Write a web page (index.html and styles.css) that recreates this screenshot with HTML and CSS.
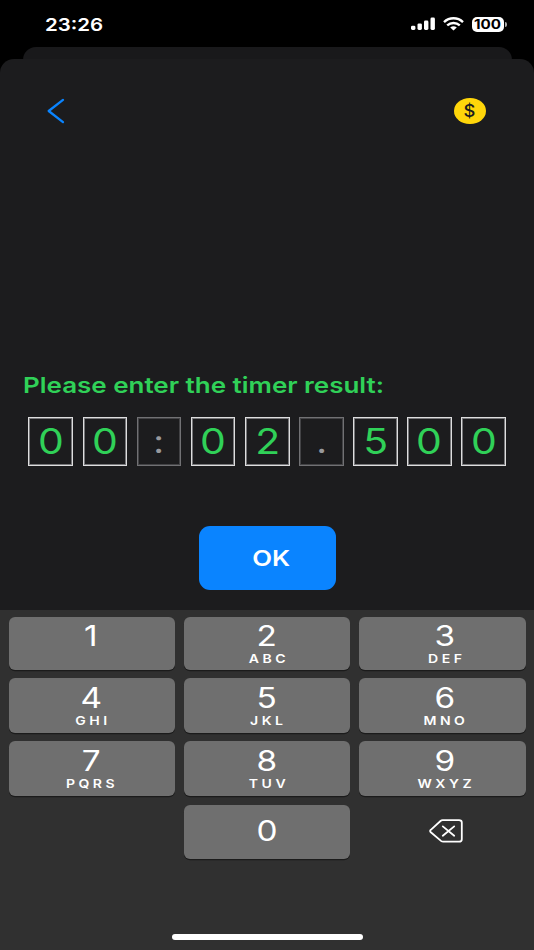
FILE: index.html
```html
<!DOCTYPE html>
<html lang="en">
<head>
<meta charset="utf-8">
<title>Timer result</title>
<link rel="stylesheet" href="styles.css">
</head>
<body>
<div class="screen">
  <header class="status">
    <span class="clock wide">23:26</span>
    <svg class="signal" width="25" height="14" viewBox="0 0 25 14" fill="#fff">
      <rect x="0" y="8.7" width="4.4" height="4.3" rx="1.4"/>
      <rect x="6.5" y="6.4" width="4.4" height="6.6" rx="1.4"/>
      <rect x="13" y="3.5" width="4.4" height="9.5" rx="1.4"/>
      <rect x="19.5" y="0.6" width="4.4" height="12.4" rx="1.4"/>
    </svg>
    <svg class="wifi" width="21" height="14" viewBox="0 0 21 14" fill="none" stroke="#fff" stroke-width="2.4">
      <path d="M1 5.1C6.4 0 14.6 0 20 5.1"/>
      <path d="M4.2 8.4C7.9 5.1 13.1 5.1 16.8 8.4"/>
      <path d="M7.2 10.6Q10.5 7.8 13.8 10.6L10.5 13.4Z" fill="#fff" stroke="none"/>
    </svg>
    <span class="battery"><span class="wide">100</span></span>
    <span class="battery-tip"></span>
  </header>
  <div class="sheet-behind"></div>
  <main class="sheet">
    <nav class="nav">
      <svg class="back" width="18" height="26" viewBox="0 0 18 26" fill="none" stroke="#0a84ff" stroke-width="2.3" stroke-linecap="round" stroke-linejoin="round">
        <path d="M16 1.9L1.7 13L16 24.1"/>
      </svg>
      <span class="coin"><span class="wide">$</span></span>
    </nav>
    <h1 class="prompt"><span class="wide">Please enter the timer result:</span></h1>
    <div class="digits">
      <span class="digit"><span class="wide">0</span></span>
      <span class="digit"><span class="wide">0</span></span>
      <span class="digit sep"><span class="wide">:</span></span>
      <span class="digit"><span class="wide">0</span></span>
      <span class="digit"><span class="wide">2</span></span>
      <span class="digit sep"><span class="wide">.</span></span>
      <span class="digit"><span class="wide">5</span></span>
      <span class="digit"><span class="wide">0</span></span>
      <span class="digit"><span class="wide">0</span></span>
    </div>
    <button class="ok"><span class="wide">OK</span></button>
  </main>
  <section class="keyboard">
    <div class="keys">
      <button class="key"><b class="wide">1</b></button>
      <button class="key"><b class="wide">2</b><small class="wide">ABC</small></button>
      <button class="key"><b class="wide">3</b><small class="wide">DEF</small></button>
      <button class="key"><b class="wide">4</b><small class="wide">GHI</small></button>
      <button class="key"><b class="wide">5</b><small class="wide">JKL</small></button>
      <button class="key"><b class="wide">6</b><small class="wide">MNO</small></button>
      <button class="key"><b class="wide">7</b><small class="wide">PQRS</small></button>
      <button class="key"><b class="wide">8</b><small class="wide">TUV</small></button>
      <button class="key"><b class="wide">9</b><small class="wide">WXYZ</small></button>
      <span></span>
      <button class="key zero"><b class="wide">0</b></button>
      <button class="delete" aria-label="Delete">
        <svg width="34" height="24" viewBox="0 0 34 24" fill="none" stroke="#fff" stroke-width="1.8" stroke-linecap="round" stroke-linejoin="round">
          <path d="M13.6 1.2H30Q32.8 1.2 32.8 3.6V20.2Q32.8 22.7 30 22.7H14.3Q13 22.7 12 21.9L1.8 13.3Q0.4 12 1.8 10.8L11.5 2Q12.4 1.2 13.6 1.2Z"/>
          <path d="M13.8 7.4L25.2 16.8M25.2 7.4L13.8 16.8"/>
        </svg>
      </button>
    </div>
    <div class="home"></div>
  </section>
</div>
</body>
</html>
```
FILE: styles.css
```css
* { box-sizing: border-box; }
body { margin: 0; background: #000; font-family: Inter, "Liberation Sans", sans-serif; }
button { border: 0; padding: 0; font: inherit; color: inherit; }
.wide { display: inline-block; white-space: nowrap; transform: scaleX(1.17); }
.screen { width: 534px; height: 950px; overflow: hidden; display: flex; flex-direction: column; color: #fff; }

.status { height: 47px; flex: none; display: flex; align-items: center; padding: 1px 27px 0 45px; }
.clock { font-size: 17.5px; font-weight: 600; line-height: 20px; padding-top: 1px; transform-origin: left; margin-right: auto; }
.signal { margin-right: 7px; }
.wifi { margin-right: 8px; }
.battery { width: 32px; height: 15px; border-radius: 5px; background: #fff; color: #000; display: flex; align-items: center; justify-content: center; font-size: 13px; font-weight: 700; line-height: 15px; }
.battery-tip { width: 2px; height: 5px; margin-left: 1px; border-radius: 0 2px 2px 0; background: #aaa; }

.sheet-behind { height: 24px; flex: none; margin: 0 22.5px -12px; border-radius: 13px 13px 0 0; background: #19191b; }
.sheet { height: 550.5px; flex: none; border-radius: 14px 14px 0 0; background: #1c1c1e; display: flex; flex-direction: column; }
.nav { height: 104px; flex: none; display: flex; align-items: center; justify-content: space-between; padding: 0 48.5px 0 47px; }
.coin { width: 31.5px; height: 26px; border-radius: 50%; background: #ffd60a; color: #1c1c1e; display: flex; align-items: center; justify-content: center; font-size: 17px; font-weight: 500; line-height: 26px; }
.coin .wide { transform: scaleX(1.08); }
.prompt { margin: 208px 0 0 23px; font-size: 22px; font-weight: 600; line-height: 28px; color: #30d158; }
.prompt .wide { transform: scaleX(1.18); transform-origin: left; }
.digits { margin: 18px 28px 0 28.4px; display: grid; grid-template-columns: repeat(9, 1fr); column-gap: 9.4px; }
.digit { height: 48.5px; border: 1px solid #dededf; box-shadow: inset 0 0 0 1px #77777a; color: #30d158; font-size: 35px; line-height: 46px; display: flex; justify-content: center; align-items: flex-start; }
.sep { border-color: #717174; box-shadow: inset 0 0 0 1px #434346; color: #98989c; font-size: 32px; line-height: 48px; }
.ok { width: 136.5px; height: 64px; margin: 60.5px 0 0 199px; padding-left: 7px; border-radius: 11px; background: #0a84ff; font-size: 22px; font-weight: 600; }

.keyboard { flex: 1; background: #303030; display: flex; flex-direction: column; align-items: center; }
.keys { width: 517px; margin-top: 7px; display: grid; grid-template-columns: repeat(3, 1fr); grid-template-rows: 53.5px 55px 55px 54px; gap: 8.2px; }
.key { border-radius: 6px; background: #6f6f6f; box-shadow: 0 1.3px 0 #1b1b1b; display: flex; flex-direction: column; align-items: center; }
.key b { font-size: 28.5px; font-weight: 380; line-height: 32px; margin: 3px 0 1px; }
.key small { font-size: 12px; font-weight: 600; line-height: 12px; height: 12px; letter-spacing: 3px; padding-left: 2.5px; }
.key:nth-child(3n+1) { padding-right: 2px; }
.key:nth-child(3n) { padding-left: 5.5px; }
.key:nth-child(n+4) { padding-top: 1px; }
.key.zero { justify-content: center; padding: 0 0 3px; }
.delete { background: none; display: flex; align-items: center; justify-content: center; padding-left: 7px; padding-bottom: 2px; }
.home { width: 191px; height: 6px; margin-top: 75px; border-radius: 3px; background: #fff; }
```
